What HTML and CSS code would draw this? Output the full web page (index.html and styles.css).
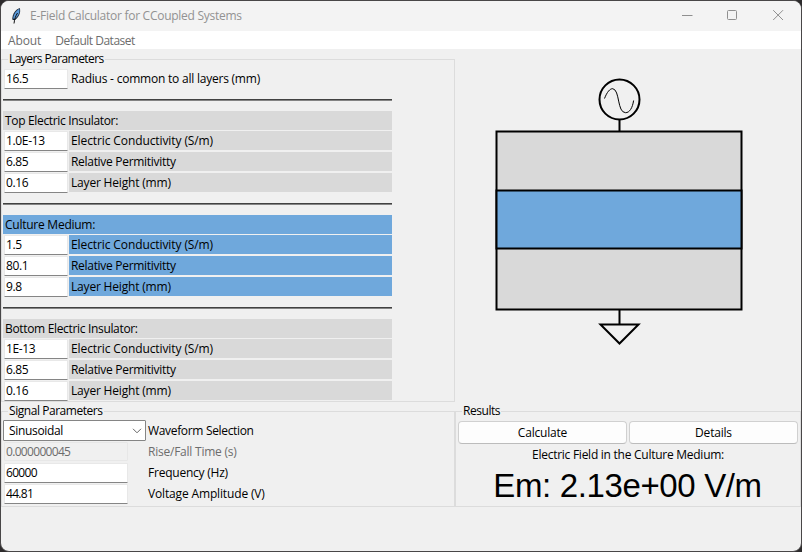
FILE: index.html
```html
<!DOCTYPE html>
<html lang="en">
<head>
<meta charset="utf-8">
<title>E-Field Calculator for CCoupled Systems</title>
<link rel="stylesheet" href="styles.css">
</head>
<body>
<div class="window">
  <header class="titlebar">
    <svg class="feather" width="14" height="18" viewBox="0 0 14 18">
      <path d="M10.800 1C6.500 2.600 3.600 6.400 3.200 12.500L5.500 13.500C9.500 10.500 12.200 6 10.800 1Z" fill="#1b2836"/>
      <path d="M10.300 1.800C7.300 3.600 4.600 7 4.200 11.500L5.600 12C9 9.500 11 6 10.300 1.800Z" fill="#5b9bdc"/>
      <path d="M8.500 6C6.500 9 5.600 12 5 16.500" fill="none" stroke="#111" stroke-width="1"/>
    </svg>
    <span class="title">E-Field Calculator for CCoupled Systems</span>
    <svg class="controls" width="119" height="30" viewBox="0 0 119 30" fill="none" stroke="#8f8f8f">
      <path d="M0 14.500H10.500"/>
      <rect x="45.500" y="9.500" width="9" height="9" rx="1"/>
      <path d="M91.200 9.200L101 19M101 9.200L91.200 19"/>
    </svg>
  </header>
  <nav class="menubar"><span class="menu-about">About</span><span class="menu-data">Default Dataset</span></nav>
  <main class="content">
    <section class="group layers">
      <h2 class="legend"><span class="w-layers">Layers Parameters</span></h2>
      <div class="row radius"><input class="entry" value="16.5"><span class="label"><span class="w-radius">Radius - common to all layers (mm)</span></span></div>
      <div class="sep"></div>
      <div class="layer">
        <h3 class="head"><span class="w-top">Top Electric Insulator:</span></h3>
        <div class="row"><input class="entry" value="1.0E-13"><span class="label"><span class="w-cond">Electric Conductivity (S/m)</span></span></div>
        <div class="row"><input class="entry" value="6.85"><span class="label"><span class="w-perm">Relative Permitivitty</span></span></div>
        <div class="row"><input class="entry" value="0.16"><span class="label"><span class="w-height">Layer Height (mm)</span></span></div>
      </div>
      <div class="sep"></div>
      <div class="layer medium">
        <h3 class="head"><span class="w-culture">Culture Medium:</span></h3>
        <div class="row"><input class="entry" value="1.5"><span class="label"><span class="w-cond">Electric Conductivity (S/m)</span></span></div>
        <div class="row"><input class="entry" value="80.1"><span class="label"><span class="w-perm">Relative Permitivitty</span></span></div>
        <div class="row"><input class="entry" value="9.8"><span class="label"><span class="w-height">Layer Height (mm)</span></span></div>
      </div>
      <div class="sep"></div>
      <div class="layer">
        <h3 class="head"><span class="w-top">Bottom Electric Insulator:</span></h3>
        <div class="row"><input class="entry" value="1E-13"><span class="label"><span class="w-cond">Electric Conductivity (S/m)</span></span></div>
        <div class="row"><input class="entry" value="6.85"><span class="label"><span class="w-perm">Relative Permitivitty</span></span></div>
        <div class="row"><input class="entry" value="0.16"><span class="label"><span class="w-height">Layer Height (mm)</span></span></div>
      </div>
    </section>
    <section class="diagram">
      <svg width="346" height="352" viewBox="455 49 346 352" fill="none" stroke="#000" stroke-width="2">
        <rect x="496.500" y="131.500" width="245" height="178" fill="#d9d9d9"/>
        <rect x="496.500" y="190.500" width="245" height="58" fill="#6fa8dc"/>
        <circle cx="619.500" cy="99.500" r="20"/>
        <path d="M619.500 119.500V131M619.500 310V324"/>
        <path d="M604.500 98.500C607 92 610 88.500 612.800 88.700C620 90 617 112.500 625.500 112.700C629.500 112.800 632.500 108 633.600 100.500" stroke-width="1"/>
        <path d="M600.500 324.500H638.500L619.500 343.500Z"/>
      </svg>
    </section>
    <section class="group signal">
      <h2 class="legend"><span class="w-signal">Signal Parameters</span></h2>
      <div class="signal-grid">
        <div class="combo"><span class="w-sinus">Sinusoidal</span>
          <svg width="10" height="6" viewBox="0 0 10 6"><path d="M1 .8L5 4.800L9 .8" fill="none" stroke="#666"/></svg>
        </div>
        <span><span class="w-wave">Waveform Selection</span></span>
        <input class="entry wide" value="0.000000045" disabled><span class="off"><span class="w-rise">Rise/Fall Time (s)</span></span>
        <input class="entry wide" value="60000"><span><span class="w-rise">Frequency (Hz)</span></span>
        <input class="entry wide" value="44.81"><span><span class="w-volt">Voltage Amplitude (V)</span></span>
      </div>
    </section>
    <section class="group results">
      <h2 class="legend"><span class="w-results">Results</span></h2>
      <div class="buttons"><button>Calculate</button><button>Details</button></div>
      <p class="caption">Electric Field in the Culture Medium:</p>
      <output class="value">Em: 2.13e+00 V/m</output>
    </section>
  </main>
</div>
</body>
</html>
```
FILE: styles.css
```css
* { box-sizing: border-box; }
body {
  margin: 0;
  background: #2d2b2c;
  color: #000;
  font: 12px/18px "Open Sans", "Noto Sans", sans-serif;
  letter-spacing: -0.1px;
}
.window {
  width: 802px;
  height: 552px;
  border: 1px solid #484647;
  border-radius: 9px;
  background: #f0f0f0;
  overflow: hidden;
}
.titlebar {
  display: flex;
  align-items: center;
  height: 30px;
  padding-left: 8px;
  background: #f3f3f3;
  color: #929292;
}
.title { letter-spacing: -0.27px; }
.feather { margin-right: 7px; }
.controls { margin-left: auto; }
.menubar {
  display: flex;
  gap: 14px;
  height: 18px;
  padding-left: 7px;
  background: #fff;
  color: #6d6d6d;
  line-height: 20px;
}
.menu-data { letter-spacing: -0.5px; }
.content {
  display: grid;
  grid-template-columns: 454px 346px;
  grid-template-rows: 352px 106px;
}
.group {
  position: relative;
  padding-left: 2px;
}
.group::before {
  content: "";
  position: absolute;
  inset: 10px 0 0 0;
  border: 1px solid #dcdcdc;
  z-index: -1;
}
.window, .content { position: relative; z-index: 0; }
.layers { height: 353px; }
.legend {
  width: max-content;
  height: 19px;
  margin: 0 0 0 5px;
  padding: 0 1px;
  background: linear-gradient(transparent 5px, #f0f0f0 5px);
  font: inherit;
  line-height: 20px;
}
.layers .legend { height: 20px; }
.w-layers { letter-spacing: -0.57px; }
.w-signal { letter-spacing: -0.45px; }
.w-results { letter-spacing: -0.45px; }
.w-radius { letter-spacing: -0.22px; }
.w-top { letter-spacing: -0.33px; }
.w-perm { letter-spacing: -0.3px; }
.w-height { letter-spacing: -0.18px; }
.w-culture { letter-spacing: -0.25px; }
.w-sinus { letter-spacing: -0.33px; }
.w-wave { letter-spacing: -0.33px; }
.w-rise { letter-spacing: -0.23px; }
.w-volt { letter-spacing: -0.15px; }
.row {
  display: grid;
  grid-template-columns: 64px 323px;
  column-gap: 1px;
  height: 21px;
  padding-left: 1px;
}
.entry {
  width: 64px;
  height: 20px;
  padding: 0 0 1px 1px;
  border: 1px solid #e8e8e8;
  border-bottom-color: #858585;
  border-radius: 1px;
  background: #fff;
  color: #000;
  font: inherit;
  letter-spacing: -0.35px;
}
.label {
  height: 19px;
  padding-left: 2px;
  line-height: 19px;
}
.radius { height: 30px; }
.sep {
  width: 389px;
  height: 2px;
  background: linear-gradient(#414141 50%, #848484 50%);
}
.layer {
  width: 389px;
  height: 102px;
  padding-top: 10px;
}
.head {
  height: 19px;
  margin: 0 0 1px;
  padding-left: 2px;
  background: #d9d9d9;
  font: inherit;
  line-height: 19px;
}
.layer .label { background: #d9d9d9; }
.medium .head, .medium .label { background: #6fa8dc; }
.diagram svg { display: block; }
.signal-grid {
  display: grid;
  grid-template-columns: 145px 1fr;
  grid-template-rows: 21px 21px 21px 21px;
  line-height: 21px;
}
.combo {
  display: flex;
  align-items: center;
  justify-content: space-between;
  width: 143px;
  height: 21px;
  padding: 0 3px 0 5px;
  border: 1px solid #858585;
  border-radius: 1px;
  background: #fff;
}
.wide { width: 124px; margin: 1px 0 0 1px; letter-spacing: -0.68px; }
.entry:disabled { height: 19px; background: #f0f0f0; border-color: #e7e7e7; color: #6d6d6d; }
.off { color: #6d6d6d; }
.results .legend { height: 20px; }
.buttons { display: flex; gap: 2px; padding-left: 1px; }
button {
  width: 169px;
  height: 23px;
  padding: 0;
  border: 1px solid #d0d0d0;
  border-bottom-color: #bcbcbc;
  border-radius: 4px;
  background: #fdfdfd;
  color: #000;
  font: inherit;
  letter-spacing: -0.2px;
}
.caption { margin: 0 2px 0 0; line-height: 22px; letter-spacing: -0.26px; text-align: center; }
.value {
  display: block;
  margin-right: 3px;
  font: 33px/40px "Liberation Sans", Arial, sans-serif;
  letter-spacing: -0.36px;
  text-align: center;
}
```
